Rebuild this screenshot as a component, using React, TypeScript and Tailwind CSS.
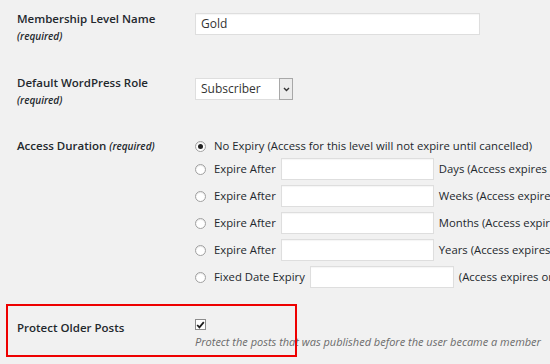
import React from 'react'

const Radio: React.FC<{ checked?: boolean }> = ({ checked }) => (
  <span className="w-[11px] h-[11px] rounded-full border border-[#a0a0a0] bg-white flex items-center justify-center shrink-0 shadow-[inset_0_1px_1px_rgba(0,0,0,0.1)]">
    {checked && <span className="w-[5px] h-[5px] rounded-full bg-[#222]" />}
  </span>
)

const TextBox: React.FC<{ w: string; value?: string }> = ({ w, value }) => (
  <div className={`${w} h-[22px] bg-white border border-[#dedede] shadow-[inset_0_1px_1px_rgba(0,0,0,0.04)] px-[5px] flex items-center text-[12px] text-[#333] shrink-0`}>
    {value}
  </div>
)

const expiryRows = [
  { label: 'Expire After', unit: 'Days (Access expires after a number of days)', w: 'w-[153px]' },
  { label: 'Expire After', unit: 'Weeks (Access expires after a number of weeks)', w: 'w-[153px]' },
  { label: 'Expire After', unit: 'Months (Access expires after a number of months)', w: 'w-[153px]' },
  { label: 'Expire After', unit: 'Years (Access expires after a number of years)', w: 'w-[153px]' },
  { label: 'Fixed Date Expiry', unit: '(Access expires on a specific date)', w: 'w-[144px]' },
]

export default function App() {
  return (
    <div
      className="w-[550px] h-[364px] overflow-hidden bg-[#f1f1f1] text-[#23282d] text-[11.5px] whitespace-nowrap"
      style={{ fontFamily: '"Open Sans", "Liberation Sans", sans-serif' }}
    >
      {/* Membership Level Name */}
      <div className="flex pt-[10px]">
        <div className="w-[178px] ml-[17px] shrink-0">
          <div className="font-semibold leading-[18px]">Membership Level Name</div>
          <div className="font-semibold italic text-[10px] leading-[16px]">(required)</div>
        </div>
        <div className="mt-[3px]">
          <TextBox w="w-[285px]" value="Gold" />
        </div>
      </div>

      {/* Default WordPress Role */}
      <div className="flex mt-[30px]">
        <div className="w-[178px] ml-[17px] shrink-0">
          <div className="font-semibold leading-[18px]">Default WordPress Role</div>
          <div className="font-semibold italic text-[10px] leading-[16px]">(required)</div>
        </div>
        <div className="mt-[4px] w-[98px] h-[22px] bg-white border border-[#dedede] flex items-center justify-between text-[12px] text-[#333]">
          <span className="pl-[5px]">Subscriber</span>
          <span className="w-[14px] h-[22px] -mr-px border border-[#a8a8a8] bg-[#ececec] flex items-center justify-center">
            <svg width="7" height="5" viewBox="0 0 7 5">
              <path d="M1 1 L3.5 3.5 L6 1" stroke="#333" strokeWidth="1.4" fill="none" />
            </svg>
          </span>
        </div>
      </div>

      {/* Access Duration */}
      <div className="flex mt-[29px]">
        <div className="w-[178px] ml-[17px] shrink-0 leading-[18px]">
          <span className="font-semibold">Access Duration </span>
          <span className="font-semibold italic text-[10px]">(required)</span>
        </div>
        <div className="flex flex-col text-[11.3px]">
          <div className="h-[18px] mb-[3px] flex items-center gap-[8px]">
            <Radio checked />
            <span>No Expiry (Access for this level will not expire until cancelled)</span>
          </div>
          {expiryRows.map((r, i) => (
            <div key={i} className="h-[22px] mb-[5px] flex items-center">
              <Radio />
              <span className="ml-[8px] mr-[5px]">{r.label}</span>
              <TextBox w={r.w} />
              <span className="ml-[5px]">{r.unit}</span>
            </div>
          ))}
        </div>
      </div>

      {/* Protect Older Posts */}
      <div className="relative flex mt-[24px]">
        <div className="w-[178px] ml-[17px] shrink-0 mt-[2px] font-semibold leading-[18px]">Protect Older Posts</div>
        <div className="flex flex-col">
          <span className="mt-[2px] w-[11px] h-[11px] border border-[#8c8c8c] bg-white flex items-center justify-center">
            <svg width="9" height="8" viewBox="0 0 9 8">
              <path d="M1.2 4 L3.4 6.3 L7.8 1.2" stroke="#1e1e1e" strokeWidth="1.8" fill="none" />
            </svg>
          </span>
          <span className="mt-[3px] leading-[18px] italic text-[11px] text-[#6b6b6b]">
            Protect the posts that was published before the user became a member
          </span>
        </div>
        <div className="absolute left-[6px] top-[-13px] w-[291px] h-[53px] border-2 border-[#ee0000]" />
      </div>
    </div>
  )
}
